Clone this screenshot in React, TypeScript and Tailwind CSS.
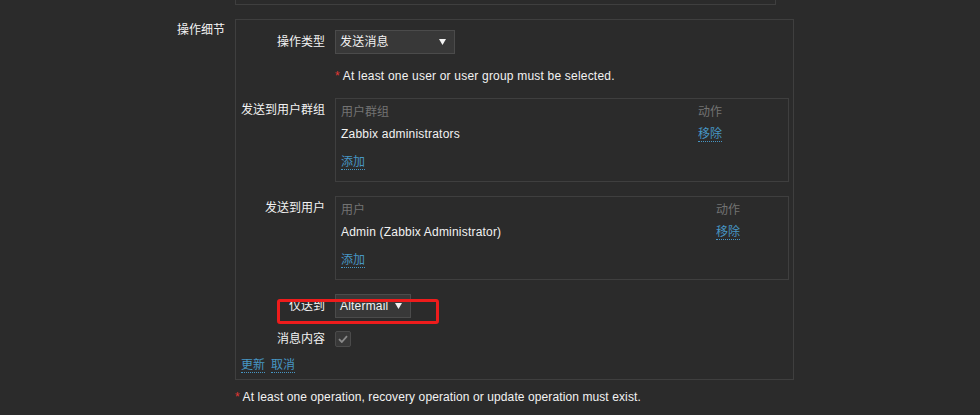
import React from "react";

const FONT = {
  fontFamily: '"Liberation Sans", Arial, "Noto Sans CJK SC", sans-serif',
};

function Caret() {
  return (
    <svg width="7" height="6" viewBox="0 0 7 6" aria-hidden="true">
      <polygon points="0,0 7,0 3.5,6" fill="#f2f2f2" />
    </svg>
  );
}

function Select({ value, width }: { value: string; width: string }) {
  return (
    <div
      className={`${width} flex h-[24px] items-center justify-between border border-[#4b4b4b] bg-[#383838] pl-[4px] pr-[8px] text-[#f2f2f2]`}
    >
      <span>{value}</span>
      <Caret />
    </div>
  );
}

function LinkText({ children }: { children: React.ReactNode }) {
  return (
    <span className="border-b border-dotted border-[#4796c4] tracking-normal text-[#4796c4]">
      {children}
    </span>
  );
}

function Row({
  label,
  children,
  top = false,
}: {
  label: string;
  children: React.ReactNode;
  top?: boolean;
}) {
  return (
    <div className={`flex gap-[10px] ${top ? "items-start" : "items-center"}`}>
      <div
        className={`w-[84px] whitespace-nowrap text-right tracking-normal text-[#f2f2f2] ${
          top ? "pt-[5px]" : ""
        }`}
      >
        {label}
      </div>
      {children}
    </div>
  );
}

function ListBox({
  head,
  item,
  nameWidth,
}: {
  head: string;
  item: string;
  nameWidth: string;
}) {
  return (
    <div className="h-[84px] w-[454px] border border-[#3f3f3f] pl-[5px] pt-[6px]">
      <div className="flex tracking-normal text-[#737373]">
        <div className={nameWidth}>{head}</div>
        <div>动作</div>
      </div>
      <div className="mt-[8px] flex text-[#f2f2f2]">
        <div className={nameWidth}>{item}</div>
        <div>
          <LinkText>移除</LinkText>
        </div>
      </div>
      <div className="mt-[14px]">
        <LinkText>添加</LinkText>
      </div>
    </div>
  );
}

export default function App() {
  return (
    <div
      className="relative h-[415px] w-[980px] overflow-hidden bg-[#2b2b2b] text-[12px] leading-[14px] tracking-[0.2px] text-[#f2f2f2]"
      style={FONT}
    >
      {/* tail of the box above */}
      <div className="ml-[235px] h-[5px] w-[541px] border-x border-b border-[#3f3f3f]" />

      <div className="mt-[14px] flex gap-[10px]">
        <div className="w-[225px] pt-[4px] text-right tracking-normal">操作细节</div>
        <div className="w-[559px] border border-[#3f3f3f] pb-[6px] pl-[5px] pt-[10px]">
          <Row label="操作类型">
            <Select value="发送消息" width="w-[120px]" />
          </Row>

          <div className="ml-[94px] mt-[15px]">
            <span className="text-[#e33734]">*</span> At least one user or user group must be
            selected.
          </div>

          <div className="mt-[15px]">
            <Row label="发送到用户群组" top>
              <ListBox head="用户群组" item="Zabbix administrators" nameWidth="w-[357px]" />
            </Row>
          </div>

          <div className="mt-[14px]">
            <Row label="发送到用户" top>
              <ListBox
                head="用户"
                item="Admin (Zabbix Administrator)"
                nameWidth="w-[375px]"
              />
            </Row>
          </div>

          <div className="mt-[14px]">
            <Row label="仅送到">
              <Select value="Altermail" width="w-[76px]" />
            </Row>
          </div>

          <div className="mt-[13px]">
            <Row label="消息内容">
              <div className="flex h-[16px] w-[16px] items-center justify-center rounded-[2px] border border-[#4b4b4b] bg-[#383838]">
                <svg width="10" height="8" viewBox="0 0 10 8" aria-hidden="true">
                  <path
                    d="M1 4.2 L3.8 7 L9 1.2"
                    fill="none"
                    stroke="#8a8a8a"
                    strokeWidth="1.8"
                  />
                </svg>
              </div>
            </Row>
          </div>

          <div className="mt-[11px] flex gap-[6px]">
            <LinkText>更新</LinkText>
            <LinkText>取消</LinkText>
          </div>
        </div>
      </div>

      <div className="ml-[235px] mt-[10px] tracking-[0.1px]">
        <span className="text-[#e33734]">*</span> At least one operation, recovery operation
        or update operation must exist.
      </div>

      {/* red annotation frame */}
      <div className="absolute left-[277px] top-[299px] h-[25px] w-[162px] rounded-[3px] border-[3px] border-[#ee1c1c]" />
    </div>
  );
}
